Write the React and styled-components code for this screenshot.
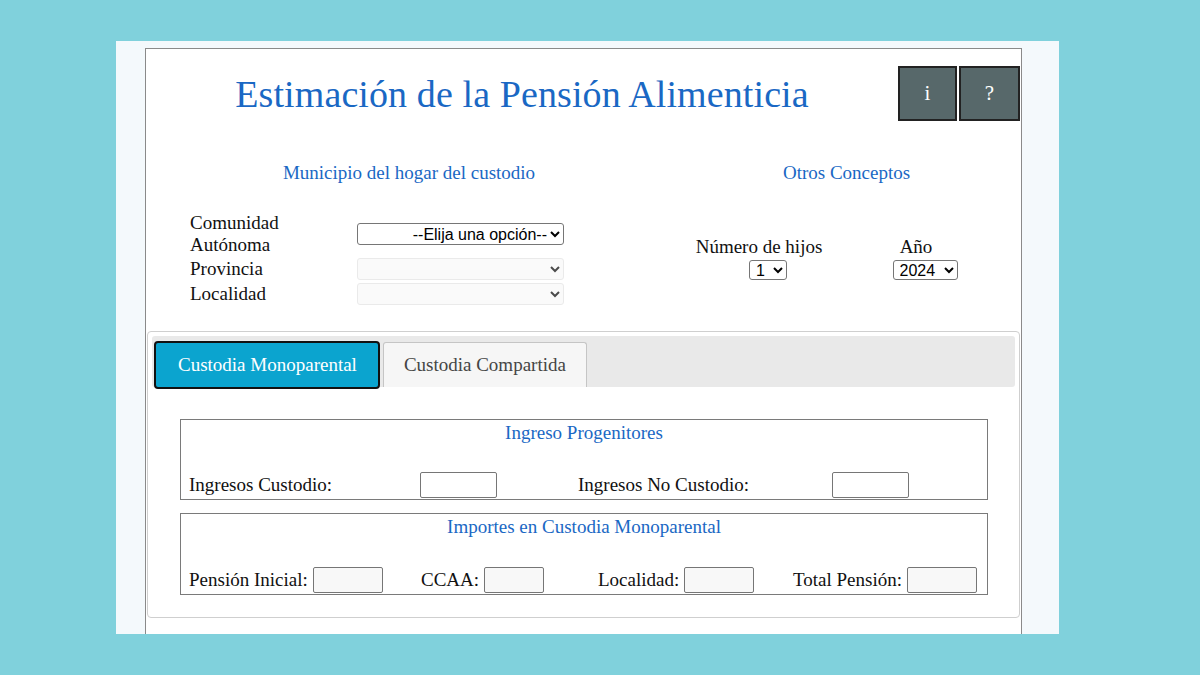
import React from 'react'
import { styled, createGlobalStyle } from 'styled-components'

const Global = createGlobalStyle`
body {
  margin: 0;
  background: #80d1dc;
  font-family: "Liberation Serif", "Times New Roman", serif;
}
`
const Page = styled.div`
width: 1200px;
height: 675px;
padding: 41px 0 0 116px;
box-sizing: border-box;
`
const Panel = styled.div`
width: 943px;
height: 593px;
background: #f4f9fc;
padding: 7px 0 0 29px;
box-sizing: border-box;
overflow: hidden;
`
const Sheet = styled.div`
width: 877px;
height: 640px;
background: #fff;
border: 1px solid #8a8a8a;
box-sizing: border-box;
`
const Header = styled.div`
display: flex;
align-items: center;
padding: 17px 1px 0 0;
height: 72px;
box-sizing: border-box;
`
const Title = styled.h1`
flex: 1;
margin: 0;
text-align: center;
font-weight: normal;
font-size: 38px;
letter-spacing: 0.1px;
color: #1a68c4;
line-height: 44px;
`
const InfoButton = styled.button`
width: ${p => p.w}px;
height: 55px;
margin-left: ${p => p.gap}px;
background: #57686a;
border: 2px solid #222;
color: #fff;
font-family: "Liberation Serif", serif;
font-size: 21px;
padding: 0;
`
const Columns = styled.div`
display: flex;
margin-top: 41px;
`
const Section = styled.div`
width: ${p => p.w}px;
box-sizing: border-box;
`
const SectionTitle = styled.div`
text-align: center;
color: #1a68c4;
font-size: 19px;
line-height: 22px;
`
const LocGrid = styled.div`
display: grid;
grid-template-columns: 167px 207px;
grid-template-rows: 44px 25px 25px;
margin: 28px 0 0 44px;
align-items: center;
`
const Label = styled.span`
font-size: 19px;
line-height: 22px;
color: #111;
white-space: nowrap;
`
const Select = styled.select`
width: ${p => p.w}px;
height: ${p => p.h || 22}px;
font-family: "Liberation Sans", Arial, sans-serif;
font-size: 16px;
color: #000;
border: 1px solid ${p => p.disabled ? '#e2e2e2' : '#767676'};
background: ${p => p.disabled ? '#f9f9f9' : '#fff'};
border-radius: 3px;
padding: 0 0 0 2px;
text-align: ${p => p.right ? 'right' : 'left'};
`
const Others = styled.div`
display: flex;
margin: 52px 0 0 4px;
`
const OtherCell = styled.div`
width: ${p => p.w}px;
display: flex;
flex-direction: column;
align-items: center;
gap: 2px;
& > select { margin-left: ${p => p.shift}px; }
`
const Tabs = styled.div`
margin: 25px 1px 0 1px;
border: 1px solid #cfcfcf;
border-radius: 4px;
padding: 4px;
height: 287px;
box-sizing: border-box;
`
const TabBar = styled.div`
display: flex;
align-items: flex-start;
gap: 3px;
height: 51px;
padding: 5px 2px 0;
box-sizing: border-box;
background: #e9e9e9;
border-radius: 3px;
`
const Tab = styled.div`
height: ${p => p.active ? 48 : 45}px;
margin-top: ${p => p.active ? 0 : 1}px;
padding: 0 ${p => p.active ? 21 : 20}px 0 ${p => p.active ? 22 : 20}px;
display: flex;
align-items: center;
box-sizing: border-box;
font-size: 19px;
color: ${p => p.active ? '#fff' : '#454545'};
background: ${p => p.active ? '#0ba4cf' : '#f6f6f6'};
border: ${p => p.active ? '2px solid #111' : '1px solid #c5c5c5'};
border-bottom: ${p => p.active ? '2px solid #111' : 'none'};
border-radius: ${p => p.active ? '4px' : '3px 3px 0 0'};
`
const TabPanel = styled.div`
padding: 32px 27px 0 28px;
display: flex;
flex-direction: column;
gap: 13px;
`
const Group = styled.div`
border: 1px solid #7a7a7a;
padding: 2px 8px 1px;
height: ${p => p.h}px;
box-sizing: border-box;
`
const GroupTitle = styled.div`
text-align: center;
color: #1a68c4;
font-size: 19px;
line-height: 22px;
margin-bottom: ${p => p.gap}px;
`
const Row = styled.div`
display: grid;
grid-template-columns: ${p => p.cols};
align-items: center;
`
const Field = styled.div`
display: flex;
align-items: center;
gap: 5px;
`
const NumInput = styled.input`
width: ${p => p.w}px;
height: 26px;
box-sizing: border-box;
border: 1px solid #767676;
border-radius: 2px;
background: ${p => p.ro ? '#f8f8f8' : '#fff'};
padding: 0;
`

export default function App() {
  return (
    <Page>
      <Global />
      <Panel>
        <Sheet>
          <Header>
            <Title>Estimación de la Pensión Alimenticia</Title>
            <InfoButton w={59} gap={0}>i</InfoButton>
            <InfoButton w={61} gap={2}>?</InfoButton>
          </Header>
          <Columns>
            <Section w={526}>
              <SectionTitle>Municipio del hogar del custodio</SectionTitle>
              <LocGrid>
                <Label>Comunidad<br />Autónoma</Label>
                <Select w={207} right>
                  <option>--Elija una opción--</option>
                </Select>
                <Label>Provincia</Label>
                <Select w={207} disabled><option></option></Select>
                <Label>Localidad</Label>
                <Select w={207} disabled><option></option></Select>
              </LocGrid>
            </Section>
            <Section w={349}>
              <SectionTitle>Otros Conceptos</SectionTitle>
              <Others>
                <OtherCell w={166} shift={18}>
                  <Label>Número de hijos</Label>
                  <Select w={38} h={20}><option>1</option></Select>
                </OtherCell>
                <OtherCell w={148} shift={18}>
                  <Label>Año</Label>
                  <Select w={65} h={20}><option>2024</option></Select>
                </OtherCell>
              </Others>
            </Section>
          </Columns>
          <Tabs>
            <TabBar>
              <Tab active>Custodia Monoparental</Tab>
              <Tab>Custodia Compartida</Tab>
            </TabBar>
            <TabPanel>
              <Group h={81}>
                <GroupTitle gap={28}>Ingreso Progenitores</GroupTitle>
                <Row cols="231px 158px 254px auto">
                  <Label>Ingresos Custodio:</Label>
                  <NumInput w={77} />
                  <Label>Ingresos No Custodio:</Label>
                  <NumInput w={77} />
                </Row>
              </Group>
              <Group h={82}>
                <GroupTitle gap={29}>Importes en Custodia Monoparental</GroupTitle>
                <Row cols="232px 177px 195px auto">
                  <Field><Label>Pensión Inicial:</Label><NumInput w={70} ro /></Field>
                  <Field><Label>CCAA:</Label><NumInput w={60} ro /></Field>
                  <Field><Label>Localidad:</Label><NumInput w={70} ro /></Field>
                  <Field><Label>Total Pensión:</Label><NumInput w={70} ro /></Field>
                </Row>
              </Group>
            </TabPanel>
          </Tabs>
        </Sheet>
      </Panel>
    </Page>
  )
}
